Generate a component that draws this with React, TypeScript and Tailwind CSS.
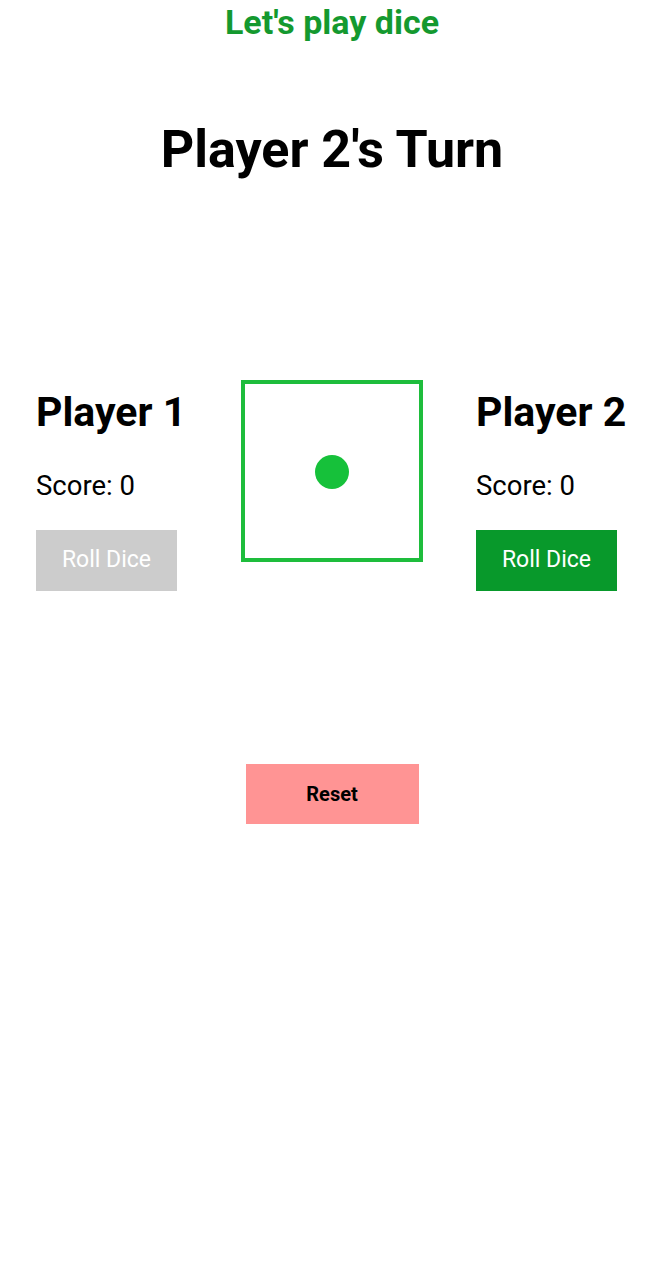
export default function App() {
	return (
		<div className="flex min-h-[1280px] w-full flex-col items-center bg-white font-['Roboto',sans-serif]">
			<h1 className="text-[34px] leading-[44px] font-bold text-[#14992f]">
				Let's play dice
			</h1>
			<h2 className="mt-[76px] text-[52px] leading-[60px] font-bold text-black">
				Player 2's Turn
			</h2>

			<div className="mt-[200px] flex w-full flex-row items-start pl-[36px]">
				<div className="flex w-[205px] flex-col items-start">
					<h3 className="mt-[8px] text-[41px] leading-[48px] font-bold text-black">
						Player 1
					</h3>
					<p className="mt-[34px] text-[27.5px] leading-[32px] text-black">Score: 0</p>
					<button className="mt-[28px] h-[61px] w-[141px] bg-[#cccccc] text-[23px] text-white">
						Roll Dice
					</button>
				</div>

				<div className="flex h-[182px] w-[182px] items-center justify-center border-4 border-[#1ebd3c]">
					<div className="mt-[2px] h-[34px] w-[34px] rounded-full bg-[#16c13a]" />
				</div>

				<div className="ml-[53px] flex flex-col items-start">
					<h3 className="mt-[8px] text-[41px] leading-[48px] font-bold text-black">
						Player 2
					</h3>
					<p className="mt-[34px] text-[27.5px] leading-[32px] text-black">Score: 0</p>
					<button className="mt-[28px] h-[61px] w-[141px] bg-[#08992b] text-[23px] text-white">
						Roll Dice
					</button>
				</div>
			</div>

			<button className="mt-[173px] h-[60px] w-[173px] bg-[#ff9494] text-[20px] font-bold text-black">
				Reset
			</button>
		</div>
	);
}
